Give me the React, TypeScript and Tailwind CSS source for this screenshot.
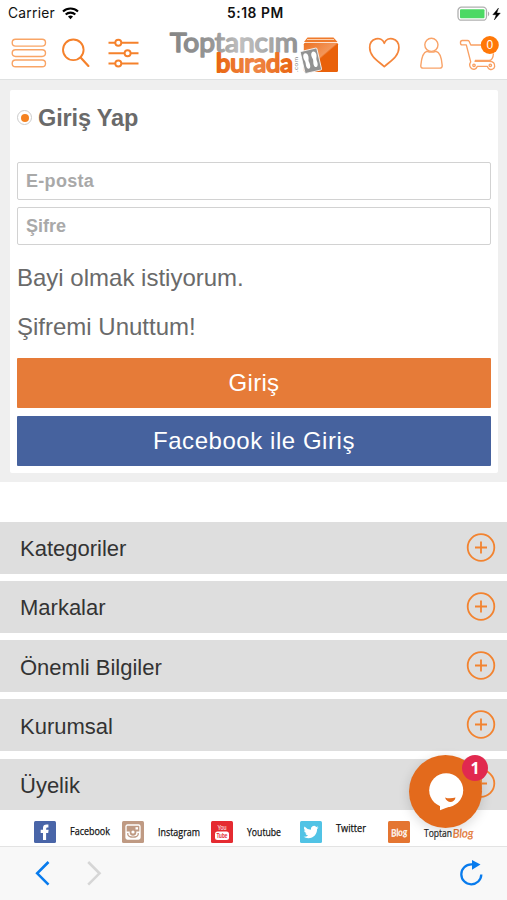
import React from 'react';

const sections = ['Kategoriler', 'Markalar', 'Önemli Bilgiler', 'Kurumsal', 'Üyelik'];

const StatusBar = () => (
  <div className="flex h-[27px] items-center pl-2 pr-1 font-['Inter',sans-serif] text-[13px] text-[#111]">
    <div className="flex w-[219px] items-center">
      <span className="w-[48px] text-[13.8px] tracking-[0.25px]">Carrier</span>
      <svg className="ml-1.5 h-[13px] w-[17px]" viewBox="0 0 17 13" fill="none" stroke="#000" strokeWidth="2.1">
        <path d="M1 4.600a10.800 10.800 0 0 1 15 0" />
        <path d="M3.700 7.600a6.900 6.900 0 0 1 9.600 0" />
        <path d="M6 9.600a3.600 3.600 0 0 1 5 0L8.500 12.200z" fill="#000" stroke="none" />
      </svg>
    </div>
    <span className="w-[64px] text-[13.8px] font-semibold tracking-[0.55px] whitespace-nowrap">5:18 PM</span>
    <svg className="ml-auto h-[16px] w-[46px]" viewBox="0 0 46 16">
      <rect x="1" y="1.200" width="28.500" height="13" rx="3.500" fill="#fff" stroke="#b0b0b0" strokeWidth="1.300" />
      <rect x="3" y="3.200" width="24.500" height="9" rx="1" fill="#4cd964" />
      <path d="M31 5.600c1.700.8 1.700 3.800 0 4.600z" fill="#aaa" />
      <path d="M41.500 2 35.800 8.700h3.400L37.300 14l6-6.900h-3.500z" fill="#000" stroke="#000" strokeWidth="0.400" />
    </svg>
  </div>
);

const MenuIcon = () => (
  <svg className="h-[52px] w-[37px]" viewBox="10 27 37 52" fill="none" stroke="#f9a566" strokeWidth="1.400">
    <rect x="12.200" y="39.300" width="33.300" height="6.800" rx="3.400" />
    <rect x="12.200" y="49.700" width="33.300" height="6.800" rx="3.400" />
    <rect x="12.200" y="60" width="33.300" height="6.800" rx="3.400" />
  </svg>
);

const SearchIcon = () => (
  <svg className="ml-[14px] h-[52px] w-[30px]" viewBox="61 27 30 52" fill="none" stroke="#f5812b" strokeLinecap="round">
    <circle cx="73.300" cy="49.800" r="10.300" strokeWidth="1.900" />
    <path d="m80.600 57.600 7.800 8.300" strokeWidth="2.200" />
  </svg>
);

const FilterIcon = () => (
  <svg className="ml-[16px] h-[52px] w-[34px]" viewBox="107 27 34 52" fill="#fff" stroke="#f5812b" strokeWidth="1.900">
    <path d="M108.500 42.700h30M108.500 53.200h30M108.500 63.500h30" />
    <circle cx="118.300" cy="42.700" r="3" />
    <circle cx="127.600" cy="53.200" r="3" />
    <circle cx="118.300" cy="63.500" r="3" />
  </svg>
);

const Logo = () => (
  <svg className="ml-[27px] h-[52px] w-[172px] overflow-visible" viewBox="168 27 172 52">
    <defs>
      <linearGradient id="gray" x1="0" x2="1">
        <stop offset="0" stopColor="#858585" />
        <stop offset="0.350" stopColor="#989898" />
        <stop offset="0.550" stopColor="#c0c0c0" />
        <stop offset="1" stopColor="#929292" />
      </linearGradient>
      <linearGradient id="orange" x1="0" x2="1">
        <stop offset="0" stopColor="#e96510" />
        <stop offset="0.500" stopColor="#ef8748" />
        <stop offset="1" stopColor="#e96510" />
      </linearGradient>
      <linearGradient id="box" x1="0" y1="0" x2="1" y2="1">
        <stop offset="0" stopColor="#ec7222" />
        <stop offset="0.480" stopColor="#f3965a" />
        <stop offset="0.520" stopColor="#e9610a" />
      </linearGradient>
    </defs>
    <text x="170" y="51.500" textLength="128" lengthAdjust="spacingAndGlyphs" fill="url(#gray)" stroke="url(#gray)" strokeWidth="1.500" strokeLinejoin="round" fontFamily="Lato, sans-serif" fontSize="26.500">Toptancım</text>
    <text x="216" y="71.800" textLength="77" lengthAdjust="spacingAndGlyphs" fill="url(#orange)" stroke="url(#orange)" strokeWidth="2" strokeLinejoin="round" fontFamily="Lato, sans-serif" fontSize="25.500">burada</text>
    <text transform="translate(298 72) rotate(-90)" textLength="15" fill="#888" fontFamily="Lato, sans-serif" fontSize="6.500">.com</text>
    <path d="M307.500 37.500h26l4 4.500h-33.500z" fill="#ef7a2b" />
    <path d="M307 39.500h27" stroke="#fbd0b0" strokeWidth="1" />
    <rect x="303.800" y="42.800" width="34.200" height="29.200" rx="1.500" fill="url(#box)" />
    <g transform="rotate(-13 311 61)">
      <rect x="302.500" y="49.500" width="17" height="22.500" rx="1" fill="#929292" stroke="#fff" strokeWidth="0.800" />
      <path d="M304.300 56c0-5 5.200-5 5.200 0 0 2.500-1.200 3.500-.7 5.500.8 3 .6 6.500-1.500 6.500s-2.500-3-2-6c.4-2.500-1-3.500-1-6zM312.500 56c0-5 5.200-5 5.200 0 0 2.500-1.400 3.500-1 6 .5 3 .1 6-2 6s-2.300-3.500-1.500-6.500c.5-2-.7-3-.7-5.500z" fill="#fff" />
    </g>
  </svg>
);

const HeartIcon = () => (
  <svg className="ml-[28px] h-[52px] w-[34px]" viewBox="368 27 34 52" fill="none" stroke="#f5863b" strokeWidth="1.700">
    <path d="M384.300 66.700C379 61.500 369.700 57 369.700 47.500c0-9.700 11.800-12 14.600-4.200 2.800-7.800 14.600-5.500 14.600 4.200 0 9.500-9.300 14-14.600 19.200z" strokeLinejoin="round" />
  </svg>
);

const UserIcon = () => (
  <svg className="ml-[17px] h-[52px] w-[26px]" viewBox="419 27 26 52" fill="none" stroke="#f9a368" strokeWidth="1.400">
    <circle cx="431.400" cy="44.800" r="6.600" />
    <path d="M427 51.300c-4.500 1.100-5.600 7.200-6.200 14.200-.1 1.800.7 2.600 2.300 2.600h16.700c1.600 0 2.500-.9 2.400-2.600-.5-7-1.700-13.100-6.300-14.200-2.500 1-6.300 1-8.900 0z" />
  </svg>
);

const CartIcon = () => (
  <svg className="ml-[14px] h-[52px] w-[42px]" viewBox="459 27 42 52">
    <g fill="none" stroke="#f9a063" strokeWidth="1.350" strokeLinejoin="round">
      <path d="M482 45h-11.200l-1.700-3.700c-.3-.6-.9-.8-1.700-.8h-5.200c-2.300 0-2.300 4.400 0 4.400h4.100l4.400 17c-3.800 5.500 4.200 10.900 6.700 4.400h9.800c2.500 6.500 10.400 2 6.400-3.600-1-1.200-2.600-1.500-4.600-1.500h-14.500" />
      <path d="M493.500 53.500c-.4 4.800-1.400 7-4.500 7h-14" />
      <circle cx="474" cy="65.300" r="1.200" />
      <circle cx="490.300" cy="65.300" r="1.200" />
    </g>
    <circle cx="489.800" cy="45" r="9" fill="#ff7808" />
    <text x="489.800" y="49.300" textAnchor="middle" fill="#fff" fontFamily="Liberation Sans, sans-serif" fontSize="12">0</text>
  </svg>
);

const LoginCard = () => (
  <div className="h-[402px] bg-[#efefef] pt-[10px] pr-[9px] pl-[10px]">
    <div className="h-[383px] rounded-[2px] bg-white px-[7px] text-[#6a6a6a]">
      <div className="flex h-[72px] items-start pt-[11px]">
        <span className="mt-[9px] flex size-[15px] shrink-0 items-center justify-center rounded-full border border-[#ccc] bg-white">
          <span className="size-[8px] rounded-full bg-[#f58220]" />
        </span>
        <h1 className="ml-[6px] text-[23.5px] leading-[34px] font-bold tracking-[-0.15px]">Giriş Yap</h1>
      </div>
      <input className="block h-[38px] w-full rounded-[2px] border border-[#d2d2d2] px-2 text-[18px] font-bold tracking-[0.3px] placeholder:text-[#a9a9a9]" placeholder="E-posta" />
      <input className="mt-[7px] block h-[38px] w-full rounded-[2px] border border-[#d2d2d2] px-2 text-[18px] font-bold placeholder:text-[#a9a9a9]" placeholder="Şifre" type="password" />
      <a className="mt-[8px] block text-[24px] leading-[49px]">Bayi olmak istiyorum.</a>
      <a className="block text-[24px] leading-[49px]">Şifremi Unuttum!</a>
      <button className="mt-[7px] block h-[50px] w-full rounded-[1px] bg-[#e67b38] pb-px text-[24px] tracking-[0.3px] text-white">Giriş</button>
      <button className="mt-2 block h-[50px] w-full rounded-[1px] bg-[#46629e] text-[24px] tracking-[0.55px] text-white">Facebook ile Giriş</button>
    </div>
  </div>
);

const Section = ({ title }: { title: string }) => (
  <div className="flex h-[51.500px] items-center justify-between bg-[#dedede] pr-[11px] pl-5 text-[22px] text-[#333]">
    <span className="pt-0.5">{title}</span>
    <svg className="size-[30px]" viewBox="0 0 30 30" fill="none" stroke="#f28330" strokeWidth="1.800">
      <circle cx="15" cy="14.500" r="13.300" />
      <path d="M9 14.500h12M15 8.500v12" />
    </svg>
  </div>
);

const iconBox = 'h-[22px] w-[22px] shrink-0';

const SocialRow = () => (
  <div className="flex h-[36px] items-start pt-[11px] pl-[34px] font-['Open_Sans',sans-serif] text-[10px] leading-[22px] text-[#222]">
    <div className="flex w-[88px]">
      <svg className={iconBox} viewBox="0 0 22 22">
        <rect width="22" height="22" rx="1.500" fill="#4965a8" />
        <path d="M9 19v-7H6.700V8.800H9V7c0-2.800 1.600-3.800 5.400-3.400v2.900c-2-.1-2.300.1-2.300 2.300h2.500l-.4 3.200h-2.100v7z" fill="#fff" />
      </svg>
      <svg className="ml-[12px] h-[22px] w-[48px] overflow-visible" viewBox="0 0 48 22">
        <text x="2" y="14" textLength="40" lengthAdjust="spacingAndGlyphs" fill="#111" stroke="#111" strokeWidth="0.250" fontSize="10.500">Facebook</text>
      </svg>
    </div>
    <div className="flex w-[89px]">
      <svg className={iconBox} viewBox="0 0 22 22">
        <rect width="22" height="22" rx="1.500" fill="#bf9a83" />
        <rect x="4" y="4" width="14" height="14" rx="1.500" fill="none" stroke="#fff" strokeWidth="1.300" />
        <path d="M4 10.500h3.700v1.200c0 4 6.600 4 6.600 0v-1.200H18V18H4z" fill="#fff" />
        <path d="M5.800 12v1.500c1 3.600 9.400 3.600 10.400 0V12" stroke="#bf9a83" strokeWidth="1.200" fill="none" />
        <circle cx="11" cy="11" r="1.600" fill="#fff" />
        <rect x="13.500" y="6.200" width="2.500" height="2.300" fill="#fff" />
      </svg>
      <svg className="ml-[12px] h-[22px] w-[50px] overflow-visible" viewBox="0 0 50 22">
        <text x="2" y="15" textLength="42" lengthAdjust="spacingAndGlyphs" fill="#111" stroke="#111" strokeWidth="0.250" fontSize="10.500">Instagram</text>
      </svg>
    </div>
    <div className="flex w-[89px]">
      <svg className={iconBox} viewBox="0 0 22 22">
        <rect width="22" height="22" rx="1.500" fill="#e52b31" />
        <text x="11" y="9.300" textAnchor="middle" fill="#fff" fontFamily="Liberation Sans, sans-serif" fontSize="7" textLength="9" lengthAdjust="spacingAndGlyphs">You</text>
        <rect x="4" y="10.500" width="14" height="8.500" rx="2.500" fill="#fff" />
        <text x="11" y="17.300" textAnchor="middle" fill="#e52b31" fontFamily="Liberation Sans, sans-serif" fontSize="7" fontWeight="700" textLength="11" lengthAdjust="spacingAndGlyphs">Tube</text>
      </svg>
      <svg className="ml-[12px] h-[22px] w-[42px] overflow-visible" viewBox="0 0 42 22">
        <text x="2" y="14.800" textLength="34" lengthAdjust="spacingAndGlyphs" fill="#111" stroke="#111" strokeWidth="0.250" fontSize="10.500">Youtube</text>
      </svg>
    </div>
    <div className="flex w-[88px]">
      <svg className={iconBox} viewBox="0 0 22 22">
        <rect width="22" height="22" rx="1.500" fill="#51c3e5" />
        <path transform="translate(3.500 3.500) scale(.63)" d="M23.950 4.570a10 10 0 0 1-2.820.780 4.960 4.960 0 0 0 2.160-2.720c-.950.550-2 .950-3.130 1.180a4.920 4.920 0 0 0-8.380 4.480A13.900 13.900 0 0 1 1.640 3.160a4.930 4.930 0 0 0 1.520 6.570 4.900 4.900 0 0 1-2.230-.620v.060a4.920 4.920 0 0 0 3.950 4.830 5 5 0 0 1-2.210.080 4.940 4.940 0 0 0 4.600 3.420A9.870 9.870 0 0 1 0 19.540a14 14 0 0 0 7.550 2.210c9.050 0 14-7.500 14-13.980v-.640a10 10 0 0 0 2.400-2.560z" fill="#fff" />
      </svg>
      <svg className="ml-[12px] h-[22px] w-[38px] overflow-visible" viewBox="0 0 38 22">
        <text x="2" y="10.800" textLength="30" lengthAdjust="spacingAndGlyphs" fill="#111" stroke="#111" strokeWidth="0.250" fontSize="10.500">Twitter</text>
      </svg>
    </div>
    <svg className={iconBox} viewBox="0 0 22 22">
      <rect width="22" height="22" rx="1.500" fill="#e47531" />
      <text x="3" y="15" transform="rotate(-6 11 11)" textLength="16" lengthAdjust="spacingAndGlyphs" fill="#fff" stroke="#fff" strokeWidth="0.300" fontFamily="Lato, sans-serif" fontStyle="italic" fontSize="10">Blog</text>
    </svg>
    <svg className="ml-[13px] h-[24px] w-[54px] overflow-visible" viewBox="423 821 54 24">
      <text x="424" y="837" textLength="28" lengthAdjust="spacingAndGlyphs" fill="#222" stroke="#222" strokeWidth="0.200" fontSize="10.500">Toptan</text>
      <text x="452.500" y="837.500" transform="rotate(-2 463 834)" textLength="21" lengthAdjust="spacingAndGlyphs" fill="#e47531" stroke="#e47531" strokeWidth="0.200" fontFamily="Lato, sans-serif" fontStyle="italic" fontSize="12">Blog</text>
    </svg>
  </div>
);

const ChatBubble = () => (
  <div className="absolute top-[749px] left-[400px] size-[100px]">
    <div className="absolute top-[6px] left-[9px] size-[73px] rounded-full bg-[#e36a1c] shadow-[0_3px_12px_rgba(0,0,0,0.15)]" />
    <svg className="absolute inset-0" viewBox="400 749 100 100">
      <circle cx="446.200" cy="790.200" r="17" fill="#fff" />
      <path d="M440 803v7.200l14-5.400z" fill="#fff" />
      <path d="M445 797.500c3 1.200 7.500 1 10.500 0-.8 5.500-8.500 6.300-10.500 0z" fill="#e36a1c" />
    </svg>
    <span className="absolute top-[6px] left-[62px] flex size-[26px] items-center justify-center rounded-full bg-[#e1294f] font-['Noto_Sans',sans-serif] text-[16px] font-bold text-white">1</span>
  </div>
);

export default function App() {
  return (
    <div className="relative h-[900px] w-[507px] overflow-hidden bg-white font-['Liberation_Sans',Arial,sans-serif]">
      <header className="h-[80px] border-b border-[#dfe1e1]">
        <StatusBar />
        <div className="flex h-[52px] pl-[10px]">
          <MenuIcon />
          <SearchIcon />
          <FilterIcon />
          <Logo />
          <HeartIcon />
          <UserIcon />
          <CartIcon />
        </div>
      </header>
      <LoginCard />
      <div className="mt-[40px] flex h-[288px] flex-col justify-between">
        {sections.map((title) => (
          <Section key={title} title={title} />
        ))}
      </div>
      <SocialRow />
      <nav className="flex h-[54px] items-start border-t border-[#e3e3e3] bg-[#f8f8f8] pt-[13px]">
        <svg className="ml-[34px] h-[28px] w-[18px]" viewBox="0 0 18 28" fill="none" stroke="#087bed" strokeWidth="2.600">
          <path d="M14.500 2 3.200 13.300 14.500 24.600" />
        </svg>
        <svg className="ml-[34px] h-[28px] w-[18px]" viewBox="0 0 18 28" fill="none" stroke="#d6d6d6" strokeWidth="2.600">
          <path d="M2.200 2 13.500 13.300 2.200 24.600" />
        </svg>
        <svg className="mr-[22px] ml-auto h-[28px] w-[26px]" viewBox="459 860 26 28">
          <path d="M481.300 874.500a10 10 0 1 1-10-10.200h3" fill="none" stroke="#087bed" strokeWidth="2.300" />
          <path d="m472 860 8.500 4.600-8.500 5.200z" fill="#087bed" />
        </svg>
      </nav>
      <ChatBubble />
    </div>
  );
}
